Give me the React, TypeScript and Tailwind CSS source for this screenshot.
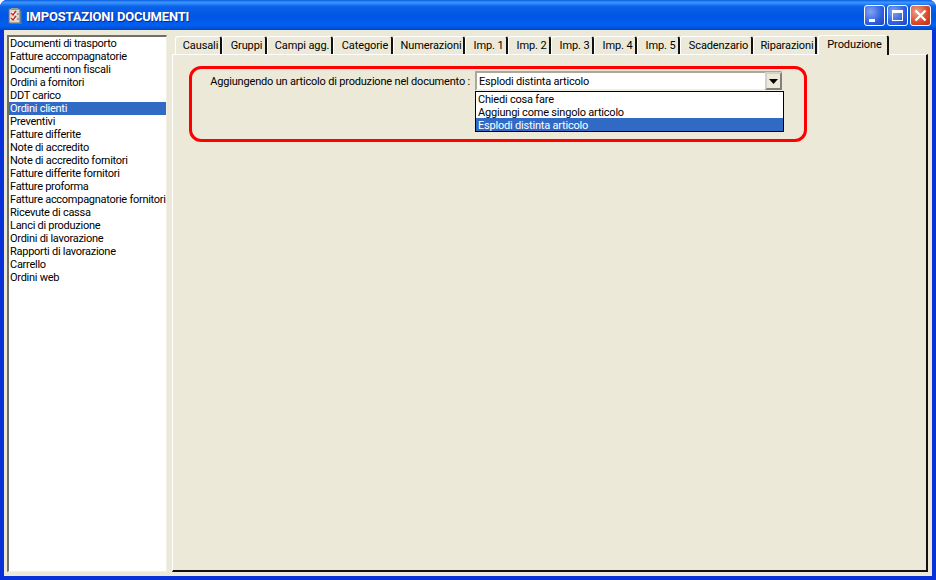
import React from "react";

const docs = [
  "Documenti di trasporto", "Fatture accompagnatorie", "Documenti non fiscali", "Ordini a fornitori", "DDT carico",
  "Ordini clienti", "Preventivi", "Fatture differite", "Note di accredito", "Note di accredito fornitori",
  "Fatture differite fornitori", "Fatture proforma", "Fatture accompagnatorie fornitori", "Ricevute di cassa",
  "Lanci di produzione", "Ordini di lavorazione", "Rapporti di lavorazione", "Carrello", "Ordini web",
];

const tabs: [string, string][] = [
  ["Causali", "w-[47px]"], ["Gruppi", "w-[45px]"], ["Campi agg.", "w-[66px]"], ["Categorie", "w-[60px]"],
  ["Numerazioni", "w-[72px]"], ["Imp. 1", "w-[43px]"], ["Imp. 2", "w-[43px]"], ["Imp. 3", "w-[43px]"],
  ["Imp. 4", "w-[43px]"], ["Imp. 5", "w-[43px]"], ["Scadenzario", "w-[73px]"], ["Riparazioni", "w-[64px]"],
];

function TitleIcon() {
  return (
    <svg width="14" height="17" viewBox="0 0 14 17" className="shrink-0 mt-[2px]">
      <path d="M12 3h1.5v13H3v-1h9z" fill="#3f8f9f" />
      <rect x="1" y="1" width="11" height="14" fill="#dcd8cc" stroke="#6a6f7a" />
      <rect x="3" y="0" width="7" height="2" fill="#9a9a90" />
      <path d="M3 4h5v3H3zM3 9h5v3H3z" fill="#fff" />
      <path d="M3 5l2 2 3-4M3 10l2 2 3-4" fill="none" stroke="#d02020" strokeWidth="1.4" />
      <path d="M9 6h2M9 11h2" stroke="#667" />
    </svg>
  );
}

function WinButton({ kind }: { kind: "min" | "max" | "close" }) {
  const bg =
    kind === "close"
      ? "bg-[radial-gradient(circle_at_30%_30%,#f0a088,#d9482a_60%,#b8300f)]"
      : "bg-[radial-gradient(circle_at_30%_30%,#7fa4f4,#2f5fdc_60%,#1f45c0)]";
  return (
    <div className={`w-[21px] h-[21px] rounded-[3px] border border-white flex items-center justify-center ${bg}`}>
      {kind === "min" && <div className="w-[6px] h-[3px] bg-white mt-[9px] mr-[5px]" />}
      {kind === "max" && <div className="w-[11px] h-[11px] border border-white border-t-[3px]" />}
      {kind === "close" && (
        <svg width="13" height="13" viewBox="0 0 13 13">
          <path d="M1.5 1.5l10 10M11.5 1.5l-10 10" stroke="#fff" strokeWidth="2.4" />
        </svg>
      )}
    </div>
  );
}

function Tab({ label, width }: { label: string; width: string }) {
  return (
    <div className={`${width} h-[18px] shrink-0 border-t border-l border-white rounded-t-[3px] border-r-2 border-r-[#111] flex items-center justify-center pl-[5px] text-[11px] leading-[14px] tracking-[-0.1px] text-black whitespace-nowrap`}>
      {label}
    </div>
  );
}

export default function App() {
  return (
    <div className="w-[936px] h-[580px] bg-[#0831d9] rounded-t-[7px] overflow-hidden flex flex-col font-['Roboto','Liberation_Sans',sans-serif]">
      <div className="h-[30px] shrink-0 pl-[8px] pr-[5px] flex items-center bg-[linear-gradient(180deg,#0a5fe0_0%,#3d95ff_8%,#0a62e8_22%,#0055e5_55%,#0060f0_85%,#0048c8_100%)]">
        <TitleIcon />
        <span className="ml-[4px] mt-[3px] text-white font-bold text-[13px] tracking-[-0.2px] [text-shadow:1px_1px_0_#0a2a8a] whitespace-nowrap">
          IMPOSTAZIONI DOCUMENTI
        </span>
        <div className="ml-auto flex gap-[2px] mt-[1px]">
          <WinButton kind="min" />
          <WinButton kind="max" />
          <WinButton kind="close" />
        </div>
      </div>
      <div className="flex-1 mx-[4px] mb-[4px] bg-[#ece9d8] pt-[5px] pl-[3px] pr-[4px] pb-[4px] flex gap-[5px] min-h-0">
        <div className="w-[160px] shrink-0 bg-white border border-t-[2px] border-l-[2px] border-t-[#716f64] border-l-[#716f64] border-r-[#f1efe2] border-b-[#f1efe2] text-[11px] leading-[13px] tracking-[-0.27px] text-black">
          {docs.map((d) => (
            <div
              key={d}
              className={`h-[13px] pl-[1px] whitespace-nowrap ${d === "Ordini clienti" ? "bg-[#316ac5] text-white" : ""}`}
            >
              {d}
            </div>
          ))}
        </div>
        <div className="flex-1 flex flex-col min-w-0">
          <div className="flex pl-[3px] pt-[1px] h-[19px] items-end shrink-0">
            {tabs.map(([l, w]) => (
              <Tab key={l} label={l} width={w} />
            ))}
            <div className="w-[71px] h-[20px] ml-[1px] mb-[-1px] relative bg-[#ece9d8] border-t border-l border-white rounded-t-[3px] border-r-2 border-r-[#111] flex items-center justify-center pl-[3px] text-[11px] tracking-[-0.1px] text-black">
              Produzione
            </div>
          </div>
          <div className="flex-1 border-t border-l border-white border-r-2 border-b-2 border-r-[#111] border-b-[#111] pt-[11px] pl-[16px]">
            <div className="w-[618px] h-[76px] border-[3px] border-[#ff0000] rounded-[12px] pt-[2px] flex items-start">
              <div className="w-[283px] text-right pr-[5px] pt-[4px] text-[11px] leading-[14px] tracking-[-0.19px] text-black whitespace-nowrap">
                Aggiungendo un articolo di produzione nel documento :
              </div>
              <div className="w-[309px] text-[11px] leading-[13px] tracking-[-0.2px] text-black">
                <div className="w-[307px] h-[20px] bg-white border-2 border-t-[#aca899] border-l-[#aca899] border-r-[#f1efe2] border-b-[#f1efe2] flex items-center pl-[2px] relative">
                  Esplodi distinta articolo
                  <div className="absolute right-[-2px] top-[-1px] w-[17px] h-[18px] bg-[#ece9d8] border-2 border-[#808080] border-t-[#d4d0c8] border-l-[#d4d0c8] flex items-center justify-center">
                    <svg width="9" height="5" viewBox="0 0 9 5" className="shrink-0"><path d="M0 0h9L4.5 5z" fill="#000" /></svg>
                  </div>
                </div>
                <div className="w-[309px] h-[41px] bg-white border border-black">
                  <div className="h-[13px] pl-[2px] pt-[1px]">Chiedi cosa fare</div>
                  <div className="h-[13px] pl-[2px] pt-[1px]">Aggiungi come singolo articolo</div>
                  <div className="h-[13px] pl-[2px] bg-[#316ac5] text-white pt-[1px]">Esplodi distinta articolo</div>
                </div>
              </div>
            </div>
          </div>
        </div>
      </div>
    </div>
  );
}
